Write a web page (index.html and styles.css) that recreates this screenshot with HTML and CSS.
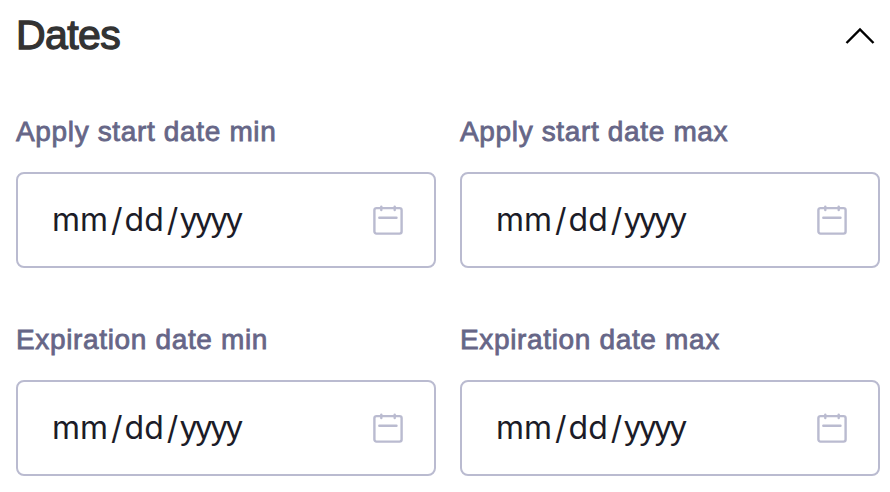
FILE: index.html
```
<!DOCTYPE html>
<html lang="en">
<head>
  <meta charset="UTF-8">
  <title>Dates</title>
  <meta name="viewport" content="width=device-width, initial-scale=1.0">
  <link rel="stylesheet" href="styles.css">
</head>
<body>

  <svg class="sprite" aria-hidden="true">
    <symbol id="calendar" viewBox="0 0 32 32">
      <rect x="2.4" y="4.1" width="27.2" height="25.5" rx="2" />
      <path d="M9.3 2.6v3.4M22.7 2.6v3.4M7.3 13.7h17.2" />
    </symbol>
  </svg>

  <section class="filter">
    <header class="filter-header">
      <h2 class="filter-title">Dates</h2>
      <svg class="chevron" viewBox="0 0 30 18"><path d="M1.5 16L15 2.5L28.5 16" /></svg>
    </header>

    <div class="fields">
      <div class="field">
        <div class="label">Apply start date min</div>
        <div class="date-input">
          <span class="placeholder">mm<span class="slash">/</span>dd<span class="slash">/</span><span class="year">yyyy</span></span>
          <svg class="calendar"><use href="#calendar" /></svg>
        </div>
      </div>
      <div class="field">
        <div class="label">Apply start date max</div>
        <div class="date-input">
          <span class="placeholder">mm<span class="slash">/</span>dd<span class="slash">/</span><span class="year">yyyy</span></span>
          <svg class="calendar"><use href="#calendar" /></svg>
        </div>
      </div>
      <div class="field">
        <div class="label">Expiration date min</div>
        <div class="date-input">
          <span class="placeholder">mm<span class="slash">/</span>dd<span class="slash">/</span><span class="year">yyyy</span></span>
          <svg class="calendar"><use href="#calendar" /></svg>
        </div>
      </div>
      <div class="field">
        <div class="label">Expiration date max</div>
        <div class="date-input">
          <span class="placeholder">mm<span class="slash">/</span>dd<span class="slash">/</span><span class="year">yyyy</span></span>
          <svg class="calendar"><use href="#calendar" /></svg>
        </div>
      </div>
    </div>
  </section>

</body>
</html>
```
FILE: styles.css
```
* {
  box-sizing: border-box;
}

body {
  margin: 0;
  background: #fff;
  font-family: "Liberation Sans", Arial, sans-serif;
}

.sprite {
  display: none;
}

.filter {
  padding: 8px 10px 0 16px;
}

.filter-header {
  display: flex;
  align-items: center;
  justify-content: space-between;
  height: 56px;
  padding-right: 5px;
}

.filter-title {
  margin: 0;
  padding-bottom: 2px;
  font-size: 41px;
  font-weight: 400;
  letter-spacing: -0.6px;
  color: #333;
  -webkit-text-stroke: 1.3px #333;
}

.chevron {
  width: 30px;
  height: 18px;
  fill: none;
  stroke: #000;
  stroke-width: 2.4;
}

.fields {
  display: grid;
  grid-template-columns: 420px 420px;
  gap: 52px 24px;
  padding-top: 48px;
}

.label {
  height: 60px;
  line-height: 39px;
  font-size: 28px;
  letter-spacing: 0.65px;
  color: #666687;
  -webkit-text-stroke: 0.8px #666687;
}

.date-input {
  display: flex;
  align-items: center;
  justify-content: space-between;
  height: 96px;
  padding: 0 30px 0 34px;
  border: 2px solid #babbd0;
  border-radius: 8px;
}

.placeholder {
  padding-bottom: 2px;
  font-family: Inter, sans-serif;
  font-size: 32px;
  color: #1c1c28;
}

.slash {
  display: inline-block;
  margin: 0 2px 0 3px;
}

.year {
  font-family: "Liberation Sans", Arial, sans-serif;
  font-size: 33px;
  letter-spacing: -1.3px;
}

.calendar {
  width: 32px;
  height: 32px;
  fill: none;
  stroke: #babbd0;
  stroke-width: 2.4;
  stroke-linecap: round;
}
```
